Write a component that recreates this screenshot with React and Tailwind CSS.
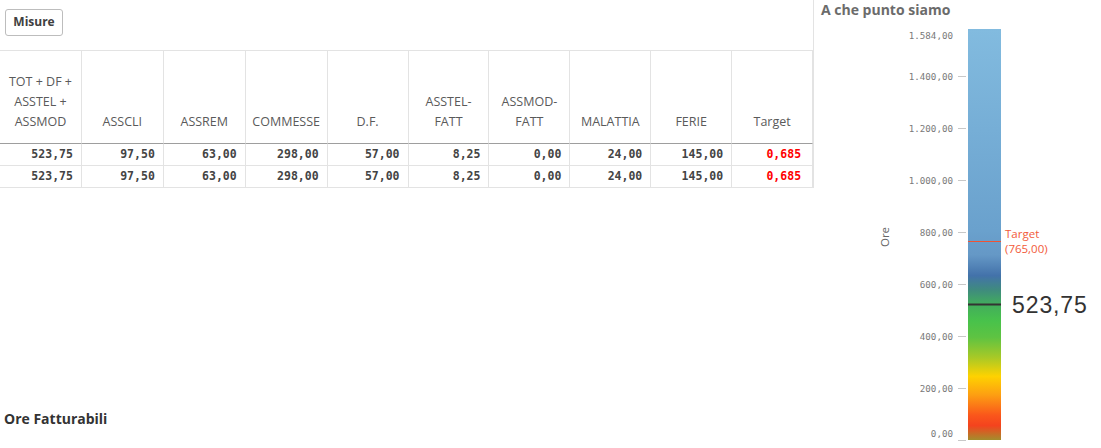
const cols = [
  { w: 'w-[82px]', head: ['TOT + DF +', 'ASSTEL +', 'ASSMOD'], val: '523,75' },
  { w: 'w-[82px]', head: ['ASSCLI'], val: '97,50' },
  { w: 'w-[82px]', head: ['ASSREM'], val: '63,00' },
  { w: 'w-[82px]', head: ['COMMESSE'], val: '298,00' },
  { w: 'w-[81px]', head: ['D.F.'], val: '57,00' },
  { w: 'w-[81px]', head: ['ASSTEL-', 'FATT'], val: '8,25' },
  { w: 'w-[81px]', head: ['ASSMOD-', 'FATT'], val: '0,00' },
  { w: 'w-[81px]', head: ['MALATTIA'], val: '24,00' },
  { w: 'w-[81px]', head: ['FERIE'], val: '145,00' },
  { w: 'w-[81px]', head: ['Target'], val: '0,685', red: true },
]

const sans = "font-['Open_Sans',_'Liberation_Sans',_sans-serif]"
const mono = "font-['DejaVu_Sans_Mono',_'Liberation_Mono',_monospace]"

function DataTable() {
  return (
    <div className="border-t border-[#e3e3e3]">
      <div className="flex">
        {cols.map((c, i) => (
          <div
            key={i}
            className={`${c.w} h-[93px] border-r border-b border-r-[#e3e3e3] border-b-[#9e9e9e] flex flex-col justify-end items-center pb-[11px] text-[12.5px] leading-5 text-[#5a5a5a] ${sans}`}
          >
            {c.head.map((l) => (
              <span key={l}>{l}</span>
            ))}
          </div>
        ))}
      </div>
      {[0, 1].map((r) => (
        <div key={r} className="flex">
          {cols.map((c, i) => (
            <div
              key={i}
              className={`${c.w} h-[22px] border-r border-b border-[#e3e3e3] flex items-center justify-end ${i === 9 ? 'pr-[11px]' : 'pr-[8px]'} text-[11.5px] font-bold ${mono} ${c.red ? 'text-[#ff0000]' : 'text-[#444444]'}`}
            >
              {c.val}
            </div>
          ))}
        </div>
      ))}
    </div>
  )
}

const ticks = [
  { v: '1.400,00', y: 76 },
  { v: '1.200,00', y: 128 },
  { v: '1.000,00', y: 180 },
  { v: '800,00', y: 232 },
  { v: '600,00', y: 284 },
  { v: '400,00', y: 336 },
  { v: '200,00', y: 388 },
]

const stops = [
  [0, '#82bbdf'],
  [0.49, '#6aa1cd'],
  [0.55, '#6598c6'],
  [0.6, '#4372aa'],
  [0.635, '#3f8b7e'],
  [0.67, '#42ad5c'],
  [0.71, '#48c24b'],
  [0.75, '#5ec342'],
  [0.8, '#a9c926'],
  [0.845, '#fed200'],
  [0.89, '#fd9f12'],
  [0.94, '#fa561b'],
  [0.965, '#f4431e'],
  [1, '#a38d2d'],
]

function Gauge() {
  return (
    <svg width="287" height="424" className="block">
      <defs>
        <linearGradient id="bar" x1="0" y1="0" x2="0" y2="1">
          {stops.map(([o, c]) => (
            <stop key={o} offset={o} stopColor={c} />
          ))}
        </linearGradient>
      </defs>
      <g transform="translate(-814,-24)">
        <rect x="968" y="29" width="33" height="411" fill="url(#bar)" />
        <g fontFamily="'DejaVu Sans Mono', monospace" fontSize="9.2" fill="#7a7a7a" textAnchor="end">
          <text x="953" y="39">1.584,00</text>
          {ticks.map((t) => (
            <g key={t.v}>
              <line x1="958" x2="966" y1={t.y + 0.5} y2={t.y + 0.5} stroke="#c8c8c8" />
              <text x="953" y={t.y + 3.5}>{t.v}</text>
            </g>
          ))}
          <line x1="958" x2="966" y1="440.5" y2="440.5" stroke="#c8c8c8" />
          <text x="953" y="436.5">0,00</text>
        </g>
        <text
          x="889"
          y="237"
          transform="rotate(-90 889 237)"
          textAnchor="middle"
          fontFamily="'Open Sans', sans-serif"
          fontSize="11.5"
          fill="#666"
        >
          Ore
        </text>
        <line x1="968" x2="1001" y1="241.5" y2="241.5" stroke="#ef5334" />
        <g fontFamily="'Open Sans', sans-serif" fontSize="11.5" fill="#f25a3a">
          <text x="1005" y="238">Target</text>
          <text x="1005" y="253">(765,00)</text>
        </g>
        <line x1="968" x2="1001" y1="304.5" y2="304.5" stroke="#333" strokeWidth="2" />
        <text
          x="1012"
          y="313"
          fontFamily="'Liberation Sans', Arial, sans-serif"
          fontSize="23"
          letterSpacing="0.9"
          fill="#333"
        >
          523,75
        </text>
      </g>
    </svg>
  )
}

export default function App() {
  return (
    <div className="w-[1101px] h-[448px] bg-white flex overflow-hidden">
      <div className="w-[814px] flex flex-col">
        <div className="h-[188px] border-r border-[#e3e3e3]">
          <div className="h-[50px] pt-[8px] pl-[5px]">
            <button
              className={`h-[27px] w-[58px] border border-[#bdbdbd] rounded-[3px] text-[12px] font-bold text-[#404040] ${sans}`}
            >
              Misure
            </button>
          </div>
          <DataTable />
        </div>
        <div className="flex-1 flex items-end pb-[19px] pl-[4px]">
          <span className={`text-[14px] font-bold text-[#333] ${sans}`}>Ore Fatturabili</span>
        </div>
      </div>
      <div className="flex-1 flex flex-col">
        <div className={`h-[24px] pl-[7px] leading-[20px] text-[14px] font-bold text-[#6b6b6b] ${sans}`}>
          A che punto siamo
        </div>
        <Gauge />
      </div>
    </div>
  )
}
